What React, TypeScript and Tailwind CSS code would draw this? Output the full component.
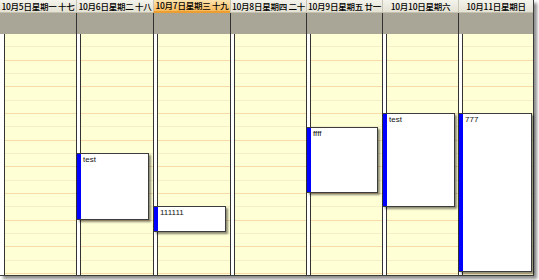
import React from "react";

type Ev = { top: string; h: string; w: string; text: string };
type Col = { label: string; w: string; sel?: boolean; ev?: Ev };

const cols: Col[] = [
  { label: "10月5日星期一 十七", w: "w-[76px]" },
  { label: "10月6日星期二 十八", w: "w-[77px]", ev: { top: "top-[119px]", h: "h-[67px]", w: "w-[72px]", text: "test" } },
  { label: "10月7日星期三 十九", w: "w-[77px]", sel: true, ev: { top: "top-[172px]", h: "h-[26px]", w: "w-[72px]", text: "111111" } },
  { label: "10月8日星期四 二十", w: "w-[76px]" },
  { label: "10月9日星期五 廿一", w: "w-[76px]", ev: { top: "top-[93px]", h: "h-[66px]", w: "w-[71px]", text: "ffff" } },
  { label: "10月10日星期六", w: "w-[76px]", ev: { top: "top-[79px]", h: "h-[94px]", w: "w-[72px]", text: "test" } },
  { label: "10月11日星期日", w: "w-[75px]", ev: { top: "top-[79px]", h: "h-[159px]", w: "w-[73px]", text: "777" } },
];

const rows = Array.from({ length: 19 }, (_, i) => i);

export default function App() {
  return (
    <div className="w-[539px] h-[280px] bg-white overflow-hidden">
      <div className="w-[534px] h-[276px] flex flex-col border-r border-b border-[#3a3a3a] shadow-[3px_3px_3px_rgba(0,0,0,0.45)]">
        {/* header */}
        <div className="flex h-[13px] shrink-0">
          {cols.map((c, i) => (
            <div
              key={i}
              className={`${c.w} h-full flex items-center justify-center whitespace-nowrap overflow-hidden text-[8.5px] font-medium leading-none tracking-[-0.25px] text-black ${
                i > 0 ? "border-l border-[#c8c5b4]" : ""
              } ${
                c.sel
                  ? "bg-gradient-to-b from-[#fde3ad] to-[#f8bb5c] border-b-2 border-b-[#ec9f30]"
                  : "bg-gradient-to-b from-[#f4f3ec] to-[#e4e2d4] border-b border-b-[#c4c1ae]"
              }`}
              style={{ fontFamily: '"Noto Sans CJK SC", "Noto Sans", sans-serif' }}
            >
              {c.label}
            </div>
          ))}
        </div>
        {/* gray band */}
        <div className="flex h-[21px] shrink-0">
          {cols.map((c, i) => (
            <div
              key={i}
              className={`${c.w} h-full bg-[#a9a698] ${i > 0 ? "border-l border-[#333333]" : ""}`}
            />
          ))}
        </div>
        {/* body */}
        <div className="flex flex-1 min-h-0">
          {cols.map((c, i) => (
            <div key={i} className={`${c.w} h-full relative flex`}>
              {i > 0 && <div className="w-px bg-[#333333]" />}
              <div className={i > 0 ? "w-[3px] bg-white" : "w-[4px] bg-white"} />
              <div className="w-px bg-[#333333]" />
              <div className="flex-1 bg-[#ffffd5] flex flex-col overflow-hidden">
                {rows.map((r) => (
                  <div
                    key={r}
                    className={`h-[13.333px] shrink-0 border-b ${
                      r % 2 === 1 ? "border-[#f7dcaa]" : "border-[#f5eec8]"
                    }`}
                  />
                ))}
              </div>
              {c.ev && (
                <div
                  className={`absolute left-[1px] ${c.ev.top} ${c.ev.h} ${c.ev.w} flex border-y border-r border-[#3c3c3c] shadow-[2px_2px_2px_rgba(0,0,0,0.45)]`}
                >
                  <div className="w-[4px] bg-[#0000ff]" />
                  <div
                    className="flex-1 bg-white pl-[2px] pt-[1px] text-[8px] leading-[9px] text-[#111]"
                    style={{ fontFamily: '"Liberation Sans", Arial, sans-serif' }}
                  >
                    {c.ev.text}
                  </div>
                </div>
              )}
            </div>
          ))}
        </div>
      </div>
    </div>
  );
}
